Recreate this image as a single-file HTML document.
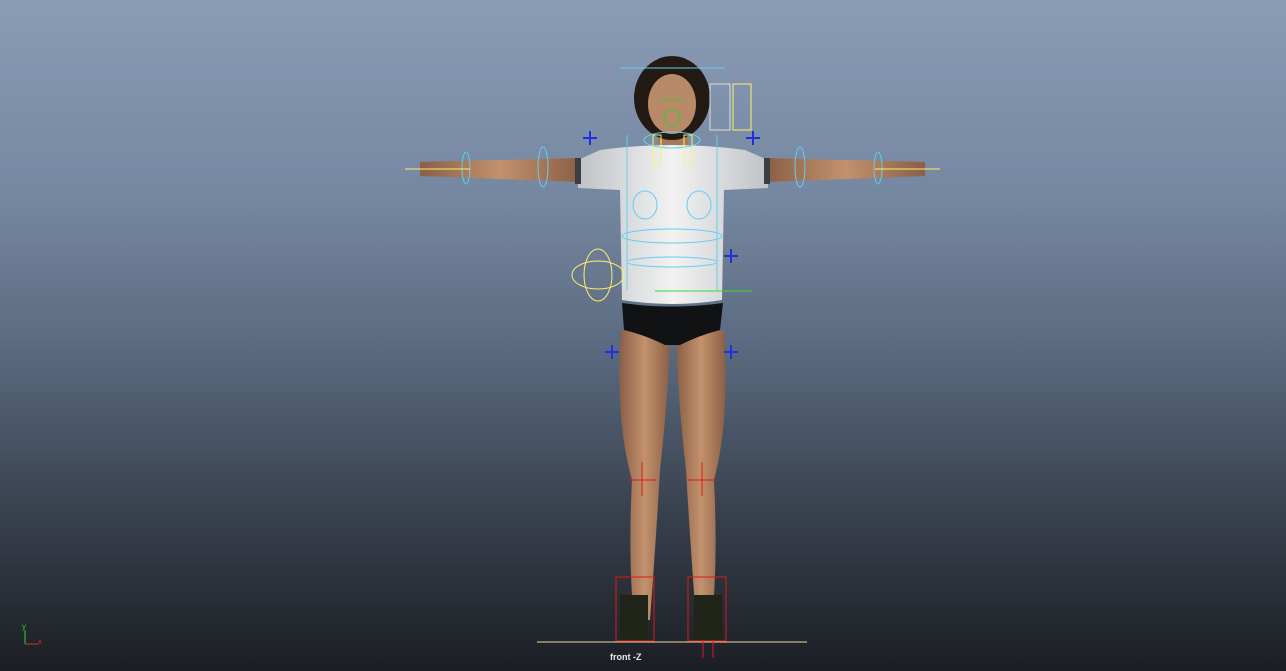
<!DOCTYPE html>
<html><head><meta charset="utf-8"><style>
html,body{margin:0;padding:0;width:1286px;height:671px;overflow:hidden}
body{background:linear-gradient(#8a9cb5 0%,#7587a0 30%,#56657a 55%,#363e4a 78%,#1b1e23 100%);font-family:"Liberation Sans",sans-serif}
.lbl{position:absolute;left:610px;top:652px;color:#e8e8e8;font-size:9px;font-weight:bold}
</style></head><body>
<svg width="1286" height="671" style="position:absolute;left:0;top:0">
<defs>
<linearGradient id="sk" x1="0" x2="1"><stop offset="0" stop-color="#8a5f45"/><stop offset=".5" stop-color="#c3916d"/><stop offset="1" stop-color="#8a5f45"/></linearGradient>
<linearGradient id="sh" x1="0" x2="1"><stop offset="0" stop-color="#bfc2c6"/><stop offset=".5" stop-color="#f2f2f2"/><stop offset="1" stop-color="#bfc2c6"/></linearGradient>
</defs>
<!-- arms -->
<path d="M420 162 L580 158 L580 182 L420 176 Z" fill="url(#sk)"/>
<path d="M766 158 L925 162 L925 176 L766 182 Z" fill="url(#sk)"/>
<!-- legs -->
<path d="M621 330 Q615 420 632 480 Q628 560 634 620 L650 620 Q656 540 660 470 Q668 400 670 335 Z" fill="url(#sk)"/>
<path d="M676 335 Q678 400 686 470 Q690 540 696 620 L712 620 Q718 560 714 480 Q730 420 724 330 Z" fill="url(#sk)"/>
<!-- neck -->
<rect x="658" y="118" width="30" height="35" fill="#a57a5a"/>
<!-- shirt -->
<path d="M600 150 Q672 140 745 150 L768 160 L768 188 L724 190 L722 300 Q672 308 622 300 L620 190 L578 188 L578 160 Z" fill="url(#sh)"/>
<rect x="575" y="158" width="6" height="26" fill="#3a3d42"/><rect x="764" y="158" width="6" height="26" fill="#3a3d42"/>
<!-- briefs -->
<path d="M622 303 Q672 310 723 303 L720 330 Q700 335 680 345 L665 345 Q645 335 624 330 Z" fill="#111214"/>
<!-- head -->
<ellipse cx="672" cy="98" rx="38" ry="42" fill="#241a14"/>
<ellipse cx="672" cy="104" rx="24" ry="30" fill="#b88a68"/>
<!-- shoes -->
<rect x="620" y="595" width="28" height="45" fill="#202418"/><rect x="694" y="595" width="28" height="45" fill="#202418"/>
<!-- controls -->
<g fill="none" stroke="#5fd0f0" stroke-width="1">
<line x1="620" y1="68" x2="725" y2="68"/>
<ellipse cx="543" cy="167" rx="5" ry="20"/><ellipse cx="800" cy="167" rx="5" ry="20"/>
<ellipse cx="466" cy="168" rx="4" ry="16"/><ellipse cx="878" cy="168" rx="4" ry="16"/>
<ellipse cx="672" cy="236" rx="50" ry="7"/><ellipse cx="672" cy="262" rx="45" ry="5"/>
<line x1="627" y1="135" x2="627" y2="290"/><line x1="717" y1="135" x2="717" y2="290"/>
<ellipse cx="645" cy="205" rx="12" ry="14"/><ellipse cx="699" cy="205" rx="12" ry="14"/>
<ellipse cx="672" cy="140" rx="28" ry="8"/>
</g>
<g stroke="#fff06a" fill="none" stroke-width="1">
<line x1="405" y1="169" x2="470" y2="169"/><line x1="875" y1="169" x2="940" y2="169"/>
<rect x="653" y="135" width="8" height="30"/><rect x="684" y="135" width="8" height="30"/>
<ellipse cx="598" cy="275" rx="26" ry="14"/><ellipse cx="598" cy="275" rx="14" ry="26"/>
<rect x="710" y="84" width="20" height="46" stroke="#ddd"/><rect x="733" y="84" width="18" height="46"/>
<line x1="537" y1="642" x2="807" y2="642" stroke="#e8d8a0"/>
</g>
<line x1="655" y1="291" x2="752" y2="291" stroke="#33dd33"/>
<g stroke="#2030e0" stroke-width="2">
<path d="M590 131v14M583 138h14M753 131v14M746 138h14M731 249v14M724 256h14M612 345v14M605 352h14M731 345v14M724 352h14"/>
</g>
<g stroke="#e01818" fill="none" stroke-width="1">
<path d="M628 480h28M642 462v34M688 480h28M702 462v34"/>
<rect x="616" y="577" width="38" height="64"/><rect x="688" y="577" width="38" height="64"/>
<path d="M703 640v18M713 640v18"/>
</g>
<g stroke="#3c3" stroke-width="1" fill="none"><circle cx="672" cy="118" r="8"/><path d="M660 100h24"/></g>
<!-- axis -->
<path d="M25 644V630" stroke="#30d030"/><path d="M25 644H38" stroke="#d03030"/>
<text x="22" y="629" fill="#30d030" font-size="8" font-family="Liberation Sans">y</text>
<text x="38" y="644" fill="#d03030" font-size="8" font-family="Liberation Sans">x</text>
</svg>
<div class="lbl">front -Z</div>
</body></html>
